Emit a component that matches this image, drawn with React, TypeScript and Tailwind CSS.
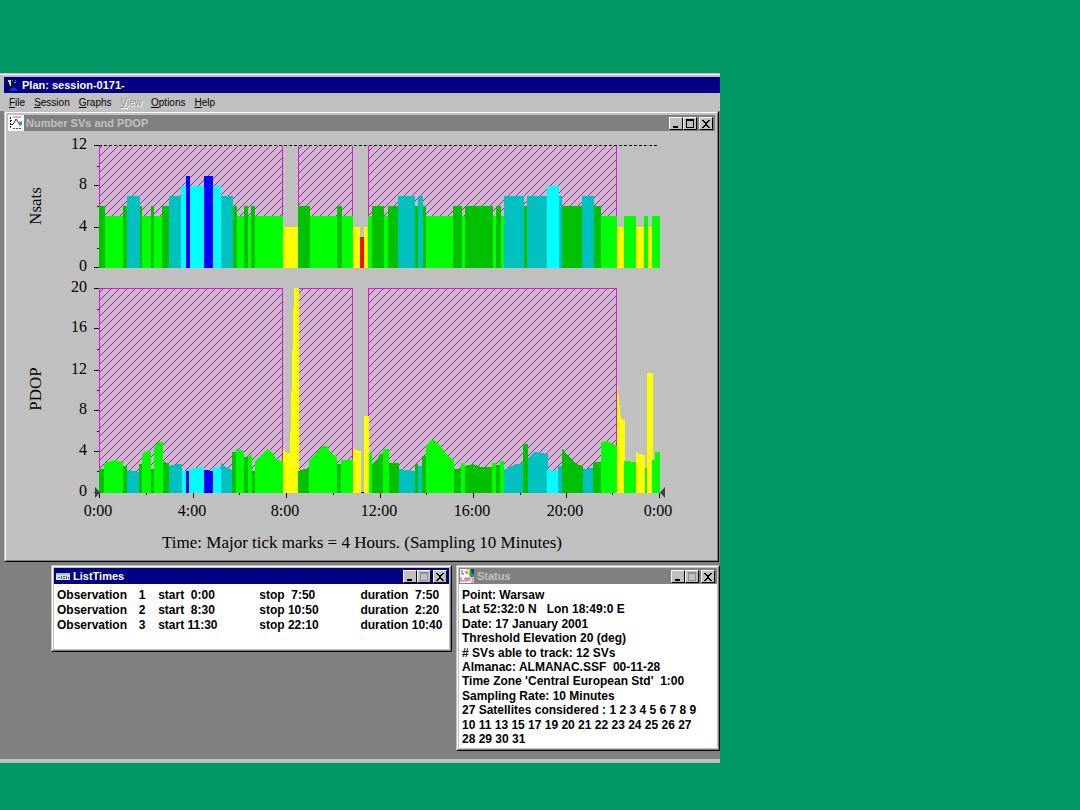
import type { ReactNode } from "react";
import clsx from "clsx";

const colors = {
  r: "#ee1100",
  y: "#ffff00",
  g: "#00ff00",
  d: "#00c000",
  t: "#00c0c0",
  c: "#00ffff",
  b: "#0000ff",
};

type ColorKey = keyof typeof colors;

// [x start, x end, number of satellites]
const nsats: [number, number, number][] = [
  [99, 105, 6], [105, 123, 5], [123, 127, 6], [127, 140, 7], [140, 142, 6],
  [142, 151, 5], [151, 154, 6], [154, 162, 5], [162, 169, 6], [169, 181, 7],
  [181, 186, 8], [186, 190, 9], [190, 204, 8], [204, 213, 9], [213, 221, 8],
  [221, 233, 7], [233, 237, 6], [237, 244, 5], [244, 248, 6], [248, 251, 5],
  [251, 255, 6], [255, 283, 5], [283, 298, 4], [298, 310, 6], [310, 337, 5],
  [337, 342, 6], [342, 353, 5], [353, 360, 4], [360, 364, 3], [364, 368, 4],
  [368, 372, 5], [372, 384, 6], [384, 388, 5], [388, 398, 6], [398, 415, 7],
  [415, 418, 6], [418, 423, 7], [423, 426, 6], [426, 453, 5], [453, 462, 6],
  [462, 465, 5], [465, 493, 6], [493, 496, 5], [496, 501, 6], [501, 504, 5],
  [504, 524, 7], [524, 527, 6], [527, 547, 7], [547, 559, 8], [559, 562, 7],
  [562, 582, 6], [582, 594, 7], [594, 601, 6], [601, 617, 5], [617, 624, 4],
  [624, 636, 5], [636, 644, 4], [644, 648, 5], [648, 652, 4], [652, 660, 5],
];

const satColors: Record<number, ColorKey> = {
  3: "r",
  4: "y",
  5: "g",
  6: "d",
  7: "t",
  8: "c",
  9: "b",
};

const satTops: Record<number, number> = {
  3: 237,
  4: 227,
  5: 216,
  6: 206,
  7: 196,
  8: 186,
  9: 176,
};

// outline of every area: color, then x,y pairs from left to right
const pdop: [ColorKey, number[]][] = [
  ["d", [99, 469, 104, 469]],
  ["g", [104, 463, 108, 462, 115, 460, 123, 462]],
  ["d", [123, 466, 127, 466]],
  ["t", [127, 470, 139, 472]],
  ["d", [139, 464, 142, 464]],
  ["g", [142, 454, 147, 451, 151, 451]],
  ["d", [151, 469, 154, 469]],
  ["g", [154, 448, 158, 442, 163, 442]],
  ["d", [163, 462, 169, 463]],
  ["t", [169, 466, 178, 464, 182, 464]],
  ["c", [182, 471, 186, 471]],
  ["b", [186, 471, 189, 471]],
  ["c", [189, 469, 201, 467, 204, 468]],
  ["b", [204, 470, 213, 471]],
  ["c", [213, 467, 221, 468]],
  ["t", [221, 463, 226, 467, 232, 470]],
  ["d", [232, 452, 236, 452]],
  ["g", [236, 449, 244, 451]],
  ["d", [244, 457, 248, 457]],
  ["g", [248, 455, 252, 455]],
  ["d", [252, 471, 255, 471]],
  ["g", [255, 461, 267, 449, 271, 451, 277, 460, 283, 461]],
  ["y", [283, 446, 286, 453, 290, 453, 294, 288, 299, 288]],
  ["d", [298, 471, 309, 468]],
  ["g", [309, 460, 316, 453, 322, 446, 327, 446, 330, 452, 337, 457]],
  ["d", [337, 464, 341, 464]],
  ["g", [341, 460, 353, 460]],
  ["y", [353, 447, 355, 450, 361, 451]],
  ["y", [364, 416, 369, 416]],
  ["g", [369, 453, 372, 453]],
  ["d", [372, 464, 377, 460, 380, 454, 383, 453]],
  ["g", [383, 449, 389, 449]],
  ["d", [389, 463, 399, 463]],
  ["t", [399, 469, 415, 471]],
  ["d", [415, 464, 418, 464]],
  ["t", [418, 466, 422, 466]],
  ["d", [422, 456, 426, 456]],
  ["g", [426, 445, 431, 440, 434, 440, 441, 447, 447, 455, 454, 460]],
  ["d", [454, 469, 461, 469]],
  ["g", [461, 463, 465, 463]],
  ["d", [465, 466, 473, 464, 481, 467, 492, 467]],
  ["g", [492, 463, 496, 463]],
  ["d", [496, 465, 500, 465]],
  ["g", [500, 461, 504, 461]],
  ["t", [504, 470, 516, 464, 523, 463]],
  ["d", [523, 444, 528, 444]],
  ["t", [528, 458, 535, 452, 548, 454]],
  ["c", [547, 470, 558, 471]],
  ["t", [558, 466, 562, 466]],
  ["d", [562, 448, 569, 457, 576, 464, 583, 466]],
  ["t", [583, 469, 593, 468]],
  ["d", [593, 462, 601, 462]],
  ["g", [601, 442, 607, 441, 617, 446]],
  ["y", [617, 380, 619, 400, 621, 419, 625, 420]],
  ["g", [624, 461, 636, 462]],
  ["y", [636, 453, 645, 455]],
  ["g", [645, 468, 648, 468]],
  ["y", [647, 373, 653, 373]],
  ["g", [652, 460, 655, 460, 655, 452, 660, 452]],
];

const sessions = [
  { from: 99, to: 283 },
  { from: 298, to: 353 },
  { from: 368, to: 617 },
];

const nsatsLabels = [
  { label: "12", y: 145 },
  { label: "8", y: 185 },
  { label: "4", y: 227 },
  { label: "0", y: 267 },
];

const pdopLabels = [
  { label: "20", y: 288 },
  { label: "16", y: 328 },
  { label: "12", y: 370 },
  { label: "8", y: 410 },
  { label: "4", y: 451 },
  { label: "0", y: 492 },
];

const timeLabels = [
  { label: "0:00", x: 99 },
  { label: "4:00", x: 193 },
  { label: "8:00", x: 286 },
  { label: "12:00", x: 380 },
  { label: "16:00", x: 473 },
  { label: "20:00", x: 566 },
  { label: "0:00", x: 659 },
];

const observations = [
  { id: 1, start: "start  0:00", stop: "stop  7:50", duration: "duration  7:50" },
  { id: 2, start: "start  8:30", stop: "stop 10:50", duration: "duration  2:20" },
  { id: 3, start: "start 11:30", stop: "stop 22:10", duration: "duration 10:40" },
];

const statusLines = [
  "Point: Warsaw",
  "Lat 52:32:0 N   Lon 18:49:0 E",
  "Date: 17 January 2001",
  "Threshold Elevation 20 (deg)",
  "# SVs able to track: 12 SVs",
  "Almanac: ALMANAC.SSF  00-11-28",
  "Time Zone 'Central European Std'  1:00",
  "Sampling Rate: 10 Minutes",
  "27 Satellites considered : 1 2 3 4 5 6 7 8 9",
  "10 11 13 15 17 19 20 21 22 23 24 25 26 27",
  "28 29 30 31",
];

const menu = ["File", "Session", "Graphs", "View", "Options", "Help"];

function areaPoints(points: number[]) {
  const first = points[0];
  const last = points[points.length - 2];
  return `${first},493 ${points.join(" ")} ${last},493`;
}

// 45 degree lines, 8 apart, cut off at the edges of the box
function hatchPath(left: number, top: number, right: number, bottom: number) {
  let path = "";

  for (let sum = Math.ceil((left + top) / 8) * 8; sum < right + bottom; sum += 8) {
    const x1 = Math.max(left, sum - bottom);
    const x2 = Math.min(right, sum - top);
    path += `M${x1} ${sum - x1}L${x2} ${sum - x2}`;
  }

  return path;
}

export default function App() {
  return (
    <div className="min-h-screen bg-[#009966] pt-[73px] font-['Liberation_Sans',Arial,sans-serif] text-black">
      <main className="w-2/3 border-t border-[#c0c0c0] bg-[#c0c0c0]">
        <div className="border-t border-white pt-[2px]">
          <header className="ml-1 flex h-4 items-center gap-1 bg-[#000080] pl-[2px] text-white">
            <PlanIcon />
            <h1 className="text-[11px] leading-4 font-bold">Plan: session-0171-</h1>
          </header>

          <nav className="flex h-[18px] items-end gap-[9px] pb-[2px] pl-[9px] text-[10px] leading-3">
            {menu.map((item) => (
              <button
                key={item}
                type="button"
                disabled={item === "View"}
                className="disabled:text-[#909090] disabled:[text-shadow:1px_1px_0_#fff]"
              >
                <span className="underline">{item[0]}</span>
                {item.slice(1)}
              </button>
            ))}
          </nav>

          <div className="border-b-4 border-[#c0c0c0] bg-[#808080] pb-2">
            <ChildWindow
              title="Number SVs and PDOP"
              icon={<GraphIcon />}
              className="ml-1 mr-px"
              roomy
            >
              <Graphs />
            </ChildWindow>

            <div className="mt-[3px] flex items-start gap-1 pl-[51px]">
              <ChildWindow
                title="ListTimes"
                icon={<ListIcon />}
                className="min-w-0 flex-1"
                active
                fixedSize
              >
                <div className="min-h-16 bg-white px-[3px] pt-1 pb-4">
                  <table className="w-full text-left text-[12px] leading-[15px] font-bold whitespace-pre">
                    <tbody>
                      {observations.map((row) => (
                        <tr key={row.id}>
                          <td className="w-[21%] p-0">Observation</td>
                          <td className="w-[5%] p-0">{row.id}</td>
                          <td className="w-[26%] p-0">{row.start}</td>
                          <td className="w-[26%] p-0">{row.stop}</td>
                          <td className="p-0">{row.duration}</td>
                        </tr>
                      ))}
                    </tbody>
                  </table>
                </div>
              </ChildWindow>

              <ChildWindow
                title="Status"
                icon={<StatusIcon />}
                className="w-[264px] shrink-0"
                fixedSize
              >
                <div className="flex min-h-[164px] flex-col justify-between bg-white px-[3px] pt-1 pb-[2px] text-[12px] leading-[14px] font-bold whitespace-pre">
                  {statusLines.map((line) => (
                    <p key={line}>{line}</p>
                  ))}
                </div>
              </ChildWindow>
            </div>
          </div>
        </div>
      </main>
    </div>
  );
}

type ChildWindowProps = {
  title: string;
  icon: ReactNode;
  className?: string;
  active?: boolean;
  roomy?: boolean;
  fixedSize?: boolean;
  children: ReactNode;
};

function ChildWindow({
  title,
  icon,
  className,
  active,
  roomy,
  fixedSize,
  children,
}: ChildWindowProps) {
  return (
    <section
      className={clsx(
        "border border-t-[#c0c0c0] border-r-black border-b-black border-l-[#c0c0c0]",
        className
      )}
    >
      <div
        className={clsx(
          "border border-t-white border-r-[#808080] border-b-[#808080] border-l-white bg-[#c0c0c0]",
          roomy ? "p-[2px]" : "p-px"
        )}
      >
        <header
          className={clsx(
            "flex h-4 items-center pr-[2px]",
            active ? "bg-[#000080] text-white" : "bg-[#808080] text-[#c0c0c0]"
          )}
        >
          {icon}
          <h2 className="ml-[2px] flex-1 text-[11px] leading-4 font-bold">{title}</h2>
          <CaptionButton label={`Minimize ${title}`}>
            <path d="M3 8h5v2H3z" fill="#000" />
          </CaptionButton>
          <CaptionButton label={`Maximize ${title}`} disabled={fixedSize}>
            <path
              d="M2 1h8v9H2zM3 3v6h6V3z"
              fill={fixedSize ? "#909090" : "#000"}
              fillRule="evenodd"
            />
          </CaptionButton>
          <span className="w-[2px]" />
          <CaptionButton label={`Close ${title}`}>
            <path
              d="M2 2h2v1h1v1h2V3h1V2h2v1H9v1H8v1H7v2h1v1h1v1h1v1H8V9H7V8H5v1H4v1H2V9h1V8h1V7h1V5H4V4H3V3H2z"
              fill="#000"
            />
          </CaptionButton>
        </header>
        {children}
      </div>
    </section>
  );
}

function CaptionButton({
  label,
  disabled,
  children,
}: {
  label: string;
  disabled?: boolean;
  children: ReactNode;
}) {
  return (
    <button
      type="button"
      aria-label={label}
      disabled={disabled}
      className="flex h-[13px] w-[14px] items-center justify-center border border-t-white border-r-black border-b-black border-l-white bg-[#c0c0c0]"
    >
      <svg viewBox="0 0 12 11" className="h-[11px] w-3" shapeRendering="crispEdges">
        {children}
      </svg>
    </button>
  );
}

function SessionArea({ from, to, top, bottom }: { from: number; to: number; top: number; bottom: number }) {
  return (
    <g>
      <rect x={from} y={top} width={to - from} height={bottom - top} fill="#c8bac8" />
      <path
        d={hatchPath(from, top, to, bottom)}
        stroke="#c010c0"
        shapeRendering="auto"
      />
    </g>
  );
}

function Graphs() {
  return (
    <svg
      viewBox="8 131 707 427"
      className="block w-full font-['Liberation_Serif','Times_New_Roman',serif]"
      role="img"
      aria-label="Number SVs and PDOP"
    >
      <g shapeRendering="crispEdges">
        {sessions.map(({ from, to }) => (
          <g key={from}>
            <SessionArea from={from} to={to} top={146} bottom={267} />
            <SessionArea from={from} to={to} top={288} bottom={492} />
            <rect x={from} y="146" width="1" height="121" fill="#dc14dc" />
            <rect x={to - 1} y="146" width="1" height="121" fill="#dc14dc" />
            <rect x={from} y="288" width="1" height="204" fill="#dc14dc" />
            <rect x={to - 1} y="288" width="1" height="204" fill="#dc14dc" />
            <rect x={from} y="288" width={to - from} height="1" fill="#dc14dc" />
          </g>
        ))}

        <path d="M99 145.5H658" stroke="#000" strokeDasharray="3 2" />

        {nsats.map(([from, to, count]) => (
          <rect
            key={from}
            x={from}
            y={satTops[count]}
            width={to - from}
            height={268 - satTops[count]}
            fill={colors[satColors[count]]}
          />
        ))}

        <path d="M361 492.5H365" stroke="#000" />
        {pdop.map(([color, points]) => (
          <polygon key={points[0]} points={areaPoints(points)} fill={colors[color]} />
        ))}

        {[...nsatsLabels, ...pdopLabels].map((tick) => (
          <rect key={tick.y} x="94" y={tick.y} width="5" height="1" />
        ))}
        {[166, 206, 248, 309, 349, 390, 431, 471].map((y) => (
          <rect key={y} x="97" y={y} width="2" height="1" />
        ))}
        {timeLabels.map((tick) => (
          <rect key={tick.x} x={tick.x} y="493" width="1" height="5" />
        ))}
        {[146, 239, 333, 426, 520, 612].map((x) => (
          <rect key={x} x={x} y="493" width="1" height="2" />
        ))}
      </g>

      <path d="M95 487L100 492.5L95 498z" fill="#404040" />
      <path d="M665 487L660 492.5L665 498z" fill="#404040" />

      <g fontSize="16" textAnchor="end">
        {[...nsatsLabels, ...pdopLabels].map((tick) => (
          <text key={tick.y} x="87" y={tick.y + 4}>
            {tick.label}
          </text>
        ))}
      </g>
      <g fontSize="16" textAnchor="middle">
        {timeLabels.map((tick) => (
          <text key={tick.x} x={tick.x - 1} y="516">
            {tick.label}
          </text>
        ))}
      </g>
      <g fontSize="17" textAnchor="middle">
        <text x="362" y="548">
          Time: Major tick marks = 4 Hours. (Sampling 10 Minutes)
        </text>
        <text transform="translate(41 206) rotate(-90)">Nsats</text>
        <text transform="translate(41 389) rotate(-90)">PDOP</text>
      </g>
    </svg>
  );
}

function PlanIcon() {
  return (
    <svg viewBox="0 0 12 14" className="h-[14px] w-3" aria-hidden="true">
      <path d="M1 2l3-1 2 2-1 4-3-1z" fill="#202018" />
      <path d="M2 2h3v2H2z" fill="#d8d860" />
      <path d="M3 4h2v4H4z" fill="#e8e8d0" />
      <path d="M6 2h1v1H6zM8 4h2v1H8zM9 2h1v1H9z" fill="#60a090" />
      <path d="M3 9h5v2H3z" fill="#101010" />
      <path d="M4 11c2-2 5-2 7 0v2H4z" fill="#1030d0" />
    </svg>
  );
}

function GraphIcon() {
  return (
    <svg viewBox="0 0 16 16" className="h-4 w-4" aria-hidden="true">
      <path d="M0 0h16v16H0z" fill="#fff" />
      <path d="M5 2h8" stroke="#d040c0" />
      <path d="M2.500 2v11M2 5.500h2M2 9.500h2" fill="none" stroke="#303030" strokeDasharray="2 1" />
      <path d="M4 10l2-2 2-4 2 3 2 1" fill="none" stroke="#303030" />
      <path d="M10 8l4-2v4l-2 1z" fill="#30a070" />
      <path d="M5 13.500h8" stroke="#505050" strokeDasharray="2 1" />
    </svg>
  );
}

function ListIcon() {
  return (
    <svg viewBox="0 0 16 16" className="ml-px h-4 w-4" aria-hidden="true">
      <path d="M1 5h14v7H1z" fill="#d8e0d8" />
      <path d="M1 5h14v2H1z" fill="#a0c8c0" />
      <path d="M3 9h2v1H3zM6 8h1v3H6zM8 8h2v1H8zM8 10h2v1H8zM11 8h1v3h-1zM13 9h1v2h-1z" fill="#506060" />
    </svg>
  );
}

function StatusIcon() {
  return (
    <svg viewBox="0 0 16 16" className="h-4 w-4" aria-hidden="true">
      <path d="M1 1h14v14H1z" fill="#fff" />
      <path d="M9 1h6v8h-4z" fill="#20a040" />
      <path d="M8 1h3v4H9z" fill="#e8e020" />
      <path d="M12 1h3v5h-2z" fill="#1830c0" />
      <path d="M3 2v4h2M6 4h2v2" fill="none" stroke="#a03060" />
      <path d="M2 9v4h3M6 10h2v3H6zM9 13v-3h2v3M12 10h2v4h-2" fill="none" stroke="#c05080" />
    </svg>
  );
}
